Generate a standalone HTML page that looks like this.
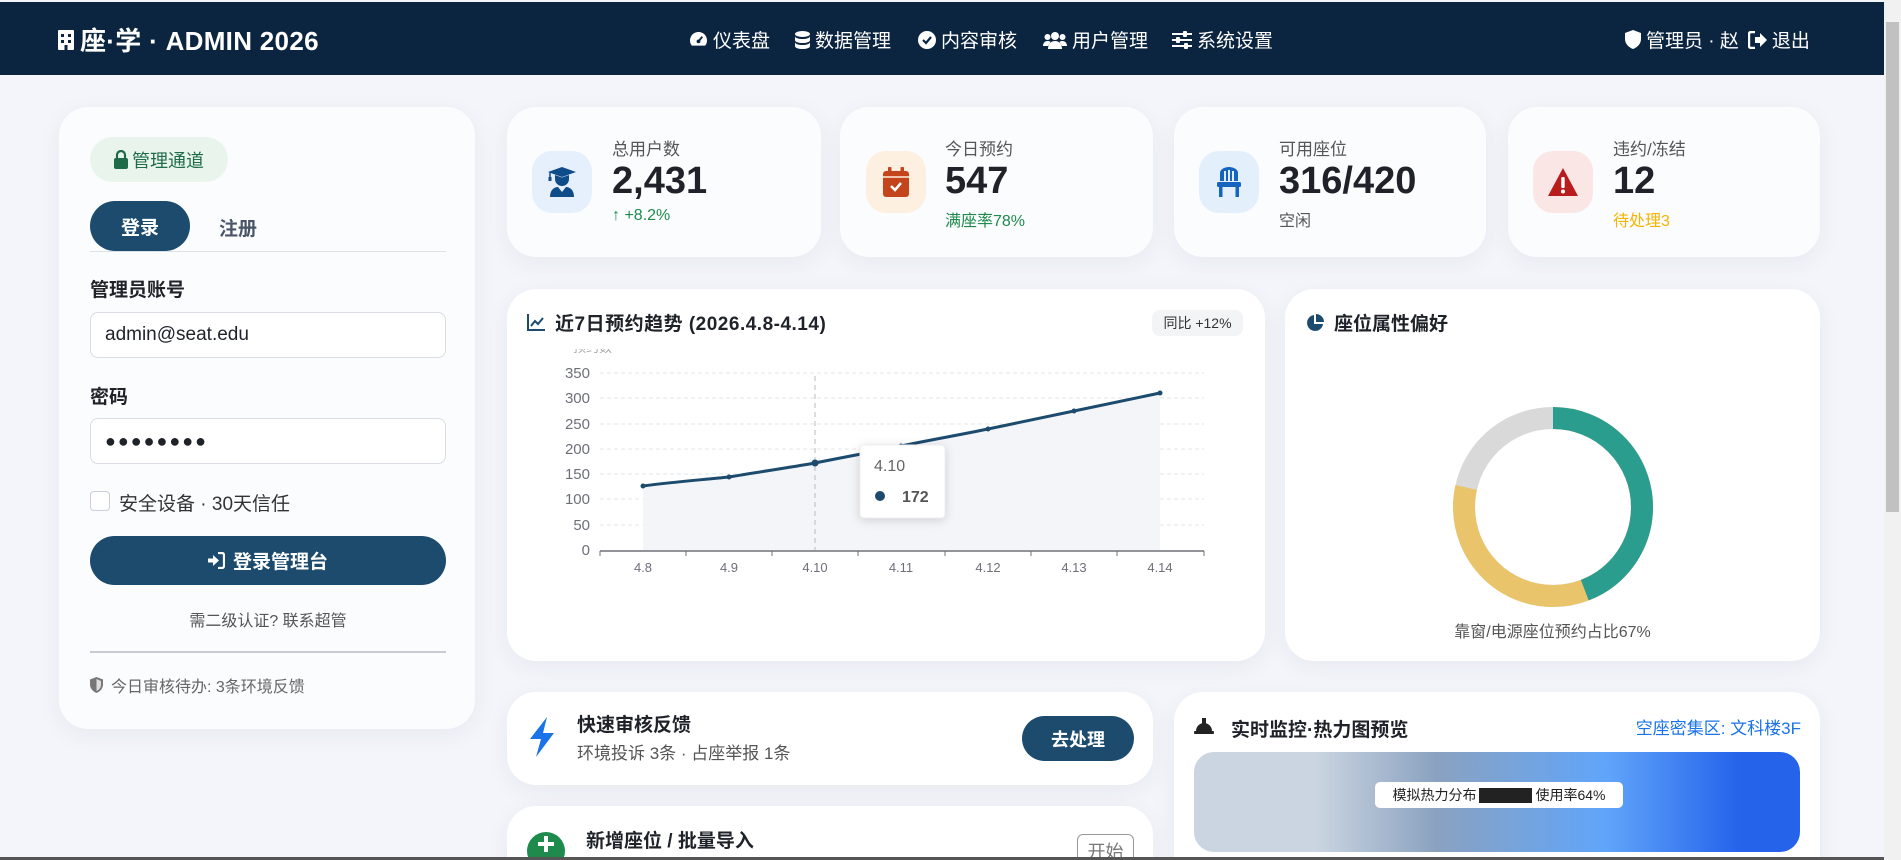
<!DOCTYPE html>
<html><head><meta charset="utf-8"><style>
*{box-sizing:border-box;margin:0;padding:0}
html{width:1901px;height:860px;overflow:hidden}
body{width:1901px;height:860px;overflow:hidden;background:#f3f5fa;font-family:"Liberation Sans","Noto Sans CJK SC",sans-serif;color:#1f2329;position:relative}
.a{position:absolute}
.hdr{left:0;top:2px;width:1884px;height:73px;background:#0b2540;color:#fff}
.card{background:#fbfcfe;border-radius:29px;box-shadow:0 6px 24px rgba(30,50,90,.06)}
.wc{background:#fff;border-radius:29px;box-shadow:0 6px 24px rgba(30,50,90,.06)}
.nav{top:24px;font-size:19px;display:flex;align-items:center;gap:5px}
.inp{left:90px;width:356px;height:46px;border:1px solid #d9dde3;border-radius:8px;background:#fff;font-size:19px;padding-left:14px;line-height:44px}
.lbl{font-size:19px;font-weight:bold;left:90px}
.sl{font-size:17px;color:#555}
.sv{font-size:38px;font-weight:bold;color:#1f2329}
.ib{width:60px;height:62px;border-radius:20px;display:flex;align-items:center;justify-content:center}
</style></head><body>
<div class="a hdr">
 <div class="a" style="left:58px;top:19px;font-size:26px;font-weight:bold;display:flex;align-items:center;gap:6px;letter-spacing:0.3px">
  <svg width="16" height="20" viewBox="0 0 16 20"><rect x="0" y="0" width="16" height="20" rx="1" fill="#fff"/><rect x="3" y="4" width="3" height="3" fill="#0b2540"/><rect x="10" y="4" width="3" height="3" fill="#0b2540"/><rect x="3" y="10" width="3" height="3" fill="#0b2540"/><rect x="10" y="10" width="3" height="3" fill="#0b2540"/><rect x="6.5" y="15" width="3" height="5" fill="#0b2540"/></svg>座·学 · ADMIN 2026</div>
 <div class="a nav" style="left:689px"><svg width="19" height="17" viewBox="0 0 20 18"><path d="M10 1a9 9 0 0 0-9 9c0 2 .6 4 2 5.5h14c1.4-1.5 2-3.5 2-5.5a9 9 0 0 0-9-9z" fill="#fff"/><path d="M10 11l4-5" stroke="#0b2540" stroke-width="2"/><circle cx="10" cy="11" r="2" fill="#0b2540"/></svg>仪表盘</div>
 <div class="a nav" style="left:795px"><svg width="15" height="18" viewBox="0 0 15 18"><ellipse cx="7.5" cy="3" rx="7.5" ry="3" fill="#fff"/><path d="M0 5c0 4 15 4 15 0v4c0 4-15 4-15 0zM0 11c0 4 15 4 15 0v4c0 4-15 4-15 0z" fill="#fff"/></svg>数据管理</div>
 <div class="a nav" style="left:918px"><svg width="18" height="18" viewBox="0 0 18 18"><circle cx="9" cy="9" r="9" fill="#fff"/><path d="M5 9l3 3 5-6" stroke="#0b2540" stroke-width="2.2" fill="none"/></svg>内容审核</div>
 <div class="a nav" style="left:1043px"><svg width="24" height="18" viewBox="0 0 24 18"><circle cx="12" cy="5" r="4" fill="#fff"/><circle cx="4.5" cy="6" r="3" fill="#fff"/><circle cx="19.5" cy="6" r="3" fill="#fff"/><path d="M5 18c0-5 3-8 7-8s7 3 7 8zM0 15c0-3 2-5 4.5-5s3 1 3 1L5 15zM24 15c0-3-2-5-4.5-5s-3 1-3 1l2.5 4z" fill="#fff"/></svg>用户管理</div>
 <div class="a nav" style="left:1172px"><svg width="20" height="18" viewBox="0 0 20 18"><path d="M0 3h20M0 9h20M0 15h20" stroke="#fff" stroke-width="2"/><rect x="11" y="0" width="4" height="6" rx="1" fill="#fff"/><rect x="4" y="6" width="4" height="6" rx="1" fill="#fff"/><rect x="12" y="12" width="4" height="6" rx="1" fill="#fff"/></svg>系统设置</div>
 <div class="a nav" style="left:1625px"><svg width="16" height="19" viewBox="0 0 16 19"><path d="M8 0l8 3v6c0 5-4 8.5-8 10C4 17.5 0 14 0 9V3z" fill="#fff"/></svg>管理员 · 赵 <svg width="19" height="18" viewBox="0 0 19 18" style="margin-left:4px"><path d="M7 1H3a2 2 0 0 0-2 2v12a2 2 0 0 0 2 2h4" stroke="#fff" stroke-width="2.4" fill="none"/><path d="M7 6h5V2l7 7-7 7v-4H7z" fill="#fff"/></svg>退出</div>
</div>

<div class="a card" style="left:59px;top:107px;width:416px;height:622px"></div>
<div class="a" style="left:90px;top:137px;width:138px;height:45px;border-radius:23px;background:#e9f5ec;color:#1e6b4a;font-size:18px;display:flex;align-items:center;justify-content:center;gap:4px"><svg width="14" height="19" viewBox="0 0 14 19"><path d="M3 8V5a4 4 0 0 1 8 0v3" stroke="#1e6b4a" stroke-width="2.2" fill="none"/><rect x="0" y="8" width="14" height="11" rx="2" fill="#1e6b4a"/></svg>管理通道</div>
<div class="a" style="left:90px;top:201px;width:100px;height:50px;border-radius:25px;background:#1c4b6e;color:#fff;font-size:19px;font-weight:bold;display:flex;align-items:center;justify-content:center">登录</div>
<div class="a" style="left:219px;top:214px;font-size:19px;font-weight:bold;color:#4a5566">注册</div>
<div class="a" style="left:90px;top:251px;width:356px;height:1px;background:#dde1e6"></div>
<div class="a lbl" style="top:275px">管理员账号</div>
<div class="a inp" style="top:312px">admin@seat.edu</div>
<div class="a lbl" style="top:382px">密码</div>
<div class="a inp" style="top:418px;font-size:18px;letter-spacing:2px">●●●●●●●●</div>
<div class="a" style="left:90px;top:491px;width:20px;height:20px;border:1px solid #ccd;border-radius:4px;background:#fff"></div>
<div class="a" style="left:119px;top:489px;font-size:19px;color:#333">安全设备 · 30天信任</div>
<div class="a" style="left:90px;top:536px;width:356px;height:49px;border-radius:25px;background:#1c4b6e;color:#fff;font-size:19px;font-weight:bold;display:flex;align-items:center;justify-content:center;gap:8px"><svg width="17" height="17" viewBox="0 0 17 17"><path d="M10 1h4a2 2 0 0 1 2 2v11a2 2 0 0 1-2 2h-4" stroke="#fff" stroke-width="2.2" fill="none"/><path d="M0 6.5h5V3l6 5.5-6 5.5v-3.5H0z" fill="#fff"/></svg>登录管理台</div>
<div class="a" style="left:90px;top:607px;width:356px;text-align:center;font-size:16px;color:#555">需二级认证? 联系超管</div>
<div class="a" style="left:90px;top:651px;width:356px;height:2px;background:#c8ccd2"></div>
<div class="a" style="left:90px;top:673px;font-size:16px;color:#666;display:flex;align-items:center;gap:8px"><svg width="13" height="16" viewBox="0 0 13 16"><path d="M6.5 0l6.5 2.5v5c0 4-3 7-6.5 8.5C3 14.5 0 11.5 0 7.5v-5z" fill="#777"/><path d="M6.5 2v12c2.5-1 4.5-3.5 4.5-6.5V4z" fill="#ddd"/></svg>今日审核待办: 3条环境反馈</div>

<div class="a card" style="left:507px;top:107px;width:314px;height:150px"></div>
<div class="a card" style="left:840px;top:107px;width:313px;height:150px"></div>
<div class="a card" style="left:1174px;top:107px;width:312px;height:150px"></div>
<div class="a card" style="left:1508px;top:107px;width:312px;height:150px"></div>

<div class="a ib" style="left:532px;top:151px;background:#e6f0fc"><svg width="28" height="30" viewBox="0 0 28 30"><path d="M14 0l14 5-14 5L0 5z" fill="#0f4c8a"/><path d="M2 5v6" stroke="#0f4c8a" stroke-width="1.5"/><rect x="0.5" y="10" width="3" height="4" fill="#0f4c8a"/><path d="M7 8v4a7 7 0 0 0 14 0V8l-7 2.5z" fill="#0f4c8a"/><path d="M2 30c0-7 4-10 8-10l4 5 4-5c4 0 8 3 8 10z" fill="#0f4c8a"/></svg></div>
<div class="a sl" style="left:612px;top:135px">总用户数</div>
<div class="a sv" style="left:612px;top:160px">2,431</div>
<div class="a" style="left:612px;top:207px;font-size:16px;color:#1e8a4c">↑ +8.2%</div>

<div class="a ib" style="left:866px;top:151px;background:#fdf0e1"><svg width="26" height="30" viewBox="0 0 26 30"><rect x="0" y="4" width="26" height="26" rx="3" fill="#c4451c"/><rect x="5" y="0" width="3.5" height="7" rx="1" fill="#c4451c"/><rect x="17.5" y="0" width="3.5" height="7" rx="1" fill="#c4451c"/><path d="M0 10h26" stroke="#fdf0e1" stroke-width="1.5"/><path d="M8 19l4 4 6-7" stroke="#fff" stroke-width="2.5" fill="none"/></svg></div>
<div class="a sl" style="left:945px;top:135px">今日预约</div>
<div class="a sv" style="left:945px;top:160px">547</div>
<div class="a" style="left:945px;top:207px;font-size:16px;color:#1e8a4c">满座率78%</div>

<div class="a ib" style="left:1199px;top:151px;background:#e3f0fb"><svg width="24" height="30" viewBox="0 0 24 30"><path d="M3 14V6a9 6 0 0 1 18 0v8" fill="#1565c0"/><path d="M8 4v10M12 3v11M16 4v10" stroke="#e3f0fb" stroke-width="2"/><rect x="0" y="15" width="24" height="5" rx="1.5" fill="#1565c0"/><rect x="2" y="19" width="3.5" height="11" fill="#1565c0"/><rect x="18.5" y="19" width="3.5" height="11" fill="#1565c0"/></svg></div>
<div class="a sl" style="left:1279px;top:135px">可用座位</div>
<div class="a sv" style="left:1279px;top:160px">316/420</div>
<div class="a" style="left:1279px;top:207px;font-size:16px;color:#555">空闲</div>

<div class="a ib" style="left:1533px;top:151px;background:#fbe6e6"><svg width="30" height="28" viewBox="0 0 30 28"><path d="M15 0L30 28H0z" fill="#b91c1c"/><rect x="13.3" y="9" width="3.4" height="11" rx="1" fill="#fff"/><circle cx="15" cy="23.5" r="2" fill="#fff"/></svg></div>
<div class="a sl" style="left:1613px;top:135px">违约/冻结</div>
<div class="a sv" style="left:1613px;top:160px">12</div>
<div class="a" style="left:1613px;top:207px;font-size:16px;color:#f5b400">待处理3</div>

<div class="a wc" style="left:507px;top:289px;width:758px;height:372px"></div>
<div class="a" style="left:527px;top:309px;font-size:19px;font-weight:bold;display:flex;align-items:center;gap:10px;letter-spacing:0.5px"><svg width="18" height="17" viewBox="0 0 18 17"><path d="M1 0v16h17" stroke="#1c4b6e" stroke-width="2" fill="none"/><path d="M4 12l4-5 3 3 5-6" stroke="#1c4b6e" stroke-width="2" fill="none"/></svg>近7日预约趋势 (2026.4.8-4.14)</div>
<div class="a" style="left:1152px;top:310px;width:91px;height:26px;border-radius:8px;background:#f3f4f6;font-size:14px;text-align:center;line-height:26px;color:#333">同比 +12%</div>
<svg class="a" style="left:507px;top:289px" width="758" height="372" viewBox="507 289 758 372">
 <text x="573" y="352" font-size="13" fill="#aaa" font-family="Liberation Sans,Noto Sans CJK SC,sans-serif">预约数</text>
 <rect x="560" y="340" width="60" height="9" fill="#fff"/>
 <g stroke="#e3e6ea" stroke-dasharray="4 3">
  <line x1="600" y1="373" x2="1204" y2="373"/><line x1="600" y1="398" x2="1204" y2="398"/><line x1="600" y1="424" x2="1204" y2="424"/><line x1="600" y1="449" x2="1204" y2="449"/><line x1="600" y1="474" x2="1204" y2="474"/><line x1="600" y1="499" x2="1204" y2="499"/><line x1="600" y1="525" x2="1204" y2="525"/>
 </g>
 <path d="M643 486 C672 482 700 480 729 477 C758 472 787 468 815 463 C844 457 873 452 901 446 C930 440 959 435 988 429 C1016 423 1045 417 1074 411 C1102 405 1131 399 1160 393 L1160 550 L643 550Z" fill="#f3f5f9"/>
 <line x1="815" y1="376" x2="815" y2="550" stroke="#bbb" stroke-dasharray="5 4"/>
 <path d="M643 486 C672 482 700 480 729 477 C758 472 787 468 815 463 C844 457 873 452 901 446 C930 440 959 435 988 429 C1016 423 1045 417 1074 411 C1102 405 1131 399 1160 393" stroke="#1c4b6e" stroke-width="3" fill="none"/>
 <g fill="#1c4b6e"><circle cx="643" cy="486" r="2.5"/><circle cx="729" cy="477" r="2.5"/><circle cx="815" cy="463" r="3.5"/><circle cx="901" cy="446" r="2.5"/><circle cx="988" cy="429" r="2.5"/><circle cx="1074" cy="411" r="2.5"/><circle cx="1160" cy="393" r="2.5"/></g>
 <line x1="600" y1="551" x2="1204" y2="551" stroke="#6e7079" stroke-width="1.5"/>
 <g stroke="#6e7079"><line x1="600" y1="551" x2="600" y2="556"/><line x1="686" y1="551" x2="686" y2="556"/><line x1="772" y1="551" x2="772" y2="556"/><line x1="858" y1="551" x2="858" y2="556"/><line x1="945" y1="551" x2="945" y2="556"/><line x1="1031" y1="551" x2="1031" y2="556"/><line x1="1117" y1="551" x2="1117" y2="556"/><line x1="1204" y1="551" x2="1204" y2="556"/></g>
 <g font-size="15" fill="#6e7079" text-anchor="end" font-family="Liberation Sans,sans-serif"><text x="590" y="378">350</text><text x="590" y="403">300</text><text x="590" y="429">250</text><text x="590" y="454">200</text><text x="590" y="479">150</text><text x="590" y="504">100</text><text x="590" y="530">50</text><text x="590" y="555">0</text></g>
 <g font-size="13" fill="#6e7079" text-anchor="middle" font-family="Liberation Sans,sans-serif"><text x="643" y="572">4.8</text><text x="729" y="572">4.9</text><text x="815" y="572">4.10</text><text x="901" y="572">4.11</text><text x="988" y="572">4.12</text><text x="1074" y="572">4.13</text><text x="1160" y="572">4.14</text></g>
 <rect x="860" y="445" width="85" height="73" rx="4" fill="#fff" stroke="#eee" style="filter:drop-shadow(0 2px 5px rgba(0,0,0,.15))"/>
 <text x="874" y="471" font-size="16" fill="#666" font-family="Liberation Sans,sans-serif">4.10</text>
 <circle cx="880" cy="496" r="5" fill="#1c4b6e"/>
 <text x="902" y="502" font-size="16" font-weight="bold" fill="#555" font-family="Liberation Sans,sans-serif">172</text>
</svg>

<div class="a wc" style="left:1285px;top:289px;width:535px;height:372px"></div>
<div class="a" style="left:1306px;top:309px;font-size:19px;font-weight:bold;display:flex;align-items:center;gap:10px"><svg width="18" height="18" viewBox="0 0 18 18"><path d="M8 1a8 8 0 1 0 9 9H8z" fill="#1c4b6e"/><path d="M10 0v8h8a8 8 0 0 0-8-8z" fill="#1c4b6e"/></svg>座位属性偏好</div>
<svg class="a" style="left:1443px;top:397px" width="220" height="220" viewBox="-110 -110 220 220">
 <g fill="none" stroke-width="22" transform="rotate(-90)">
  <circle r="89" stroke="#d9d9d9"/>
  <circle r="89" stroke="#e9c46a" stroke-dasharray="439 560"/>
  <circle r="89" stroke="#2a9d8f" stroke-dasharray="247 560"/>
 </g>
</svg>
<div class="a" style="left:1285px;top:618px;width:535px;text-align:center;font-size:16px;color:#555">靠窗/电源座位预约占比67%</div>

<div class="a wc" style="left:507px;top:692px;width:646px;height:93px"></div>
<svg class="a" style="left:527px;top:717px" width="30" height="40" viewBox="0 0 30 40"><path d="M20 0L3 22h11L9 40 27 16H16z" fill="#1a73e8"/></svg>
<div class="a" style="left:577px;top:710px;font-size:19px;font-weight:bold">快速审核反馈</div>
<div class="a" style="left:577px;top:739px;font-size:17px;color:#555">环境投诉 3条 · 占座举报 1条</div>
<div class="a" style="left:1022px;top:716px;width:112px;height:45px;border-radius:23px;background:#1c4b6e;color:#fff;font-size:18px;font-weight:bold;display:flex;align-items:center;justify-content:center">去处理</div>

<div class="a wc" style="left:507px;top:806px;width:646px;height:80px"></div>
<div class="a" style="left:527px;top:832px;width:38px;height:38px;border-radius:50%;background:#1e8a4c"></div>
<div class="a" style="left:538px;top:842px;width:16px;height:4px;background:#fff"></div>
<div class="a" style="left:544px;top:836px;width:4px;height:16px;background:#fff"></div>
<div class="a" style="left:586px;top:826px;font-size:19px;font-weight:bold">新增座位 / 批量导入</div>
<div class="a" style="left:1077px;top:834px;width:57px;height:40px;border:1px solid #999;border-radius:6px;font-size:18px;color:#777;text-align:center;line-height:34px">开始</div>

<div class="a wc" style="left:1174px;top:692px;width:646px;height:200px"></div>
<svg class="a" style="left:1194px;top:718px" width="20" height="17" viewBox="0 0 20 17"><path d="M2 13a8 8 0 0 1 16 0z" fill="#222"/><rect x="8" y="0" width="4" height="8" fill="#222"/><rect x="0" y="13" width="20" height="3" rx="1" fill="#222"/></svg>
<div class="a" style="left:1231px;top:715px;font-size:19px;font-weight:bold">实时监控·热力图预览</div>
<div class="a" style="left:1600px;top:714px;width:201px;text-align:right;font-size:17px;color:#1a73e8">空座密集区: 文科楼3F</div>
<div class="a" style="left:1194px;top:752px;width:606px;height:100px;border-radius:20px;background:linear-gradient(90deg,#cbd5e1 0%,#cbd5e1 20%,#8aa2c0 40%,#60a5fa 68%,#2563eb 90%,#2563eb 100%)"></div>
<div class="a" style="left:1375px;top:782px;width:248px;height:26px;border-radius:5px;background:#fff;font-size:14px;display:flex;align-items:center;justify-content:center;gap:3px;color:#222">模拟热力分布 <span style="display:inline-block;width:53px;height:15px;background:#222;"></span> 使用率64%</div>

<div class="a" style="left:1884px;top:0;width:17px;height:860px;background:#f1f1f1;z-index:5"></div>
<div class="a" style="left:1886px;top:22px;width:13px;height:490px;background:#c1c1c1;z-index:6"></div>
<div class="a" style="left:0;top:857px;width:1884px;height:3px;background:#555;z-index:5"></div>
</body></html>
